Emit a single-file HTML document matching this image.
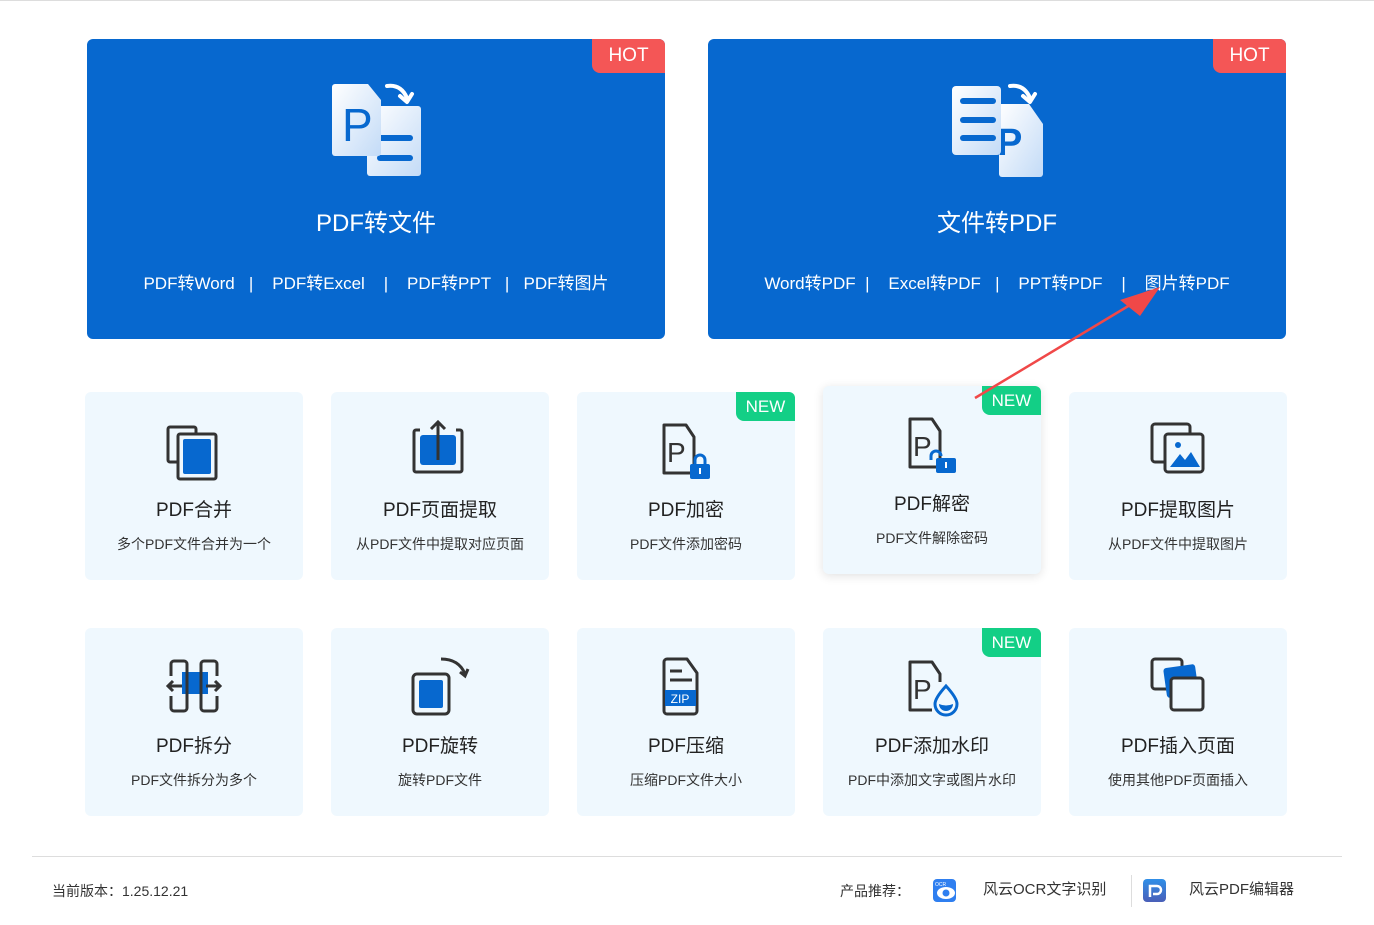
<!DOCTYPE html>
<html><head><meta charset="utf-8"><style>
*{margin:0;padding:0;box-sizing:border-box}
body{width:1374px;height:925px;background:#fff;position:relative;overflow:hidden;font-family:"Liberation Sans","Noto Sans CJK SC",sans-serif}
.big{position:absolute;top:39px;width:578px;height:300px;background:#0768cf;border-radius:6px;color:#fff;text-align:center}
.big .t{position:absolute;top:171px;left:0;right:0;font-size:24px;line-height:28px}
.big .l{position:absolute;top:235px;left:0;right:0;font-size:17px;line-height:20px;white-space:pre}
.hot{position:absolute;top:0;right:0;width:73px;height:34px;background:#f45656;border-radius:0 6px 0 8px;font-size:19px;line-height:34px;text-align:center;color:#fff}
.big svg{position:absolute;left:244px;top:44px}
.c{position:absolute;width:218px;height:188px;background:#eff8fe;border-radius:6px;text-align:center}
.c .t{position:absolute;top:108px;left:0;right:0;font-size:19px;line-height:22px;color:#222}
.c .s{position:absolute;top:144px;left:0;right:0;font-size:14px;line-height:16px;color:#333}
.c svg{position:absolute;left:79px;top:28px}
.new{position:absolute;top:0;right:0;width:59px;height:29px;background:#13cf86;border-radius:0 6px 0 8px;color:#fff;font-size:17px;line-height:29px;text-align:center}
.r1{top:392px}.r2{top:628px}
.ft{position:absolute;font-size:14px;line-height:18px;color:#333}
</style></head><body>
<div style="position:absolute;left:0;top:0;width:1374px;height:1px;background:#ddd"></div>

<svg width="0" height="0" style="position:absolute"><defs><linearGradient id="g" x1="0" y1="0" x2="1" y2="1"><stop offset="0" stop-color="#fff"/><stop offset="1" stop-color="#c3dbf7"/></linearGradient></defs></svg>

<div class="big" style="left:87px">
<div class="hot">HOT</div>
<svg width="92" height="95" viewBox="0 0 92 95">
<path d="M36 26 a3 3 0 0 1 3 -3 h48 a3 3 0 0 1 3 3 v64 a3 3 0 0 1 -3 3 h-48 a3 3 0 0 1 -3 -3z" fill="url(#g)"/>
<rect x="46" y="52" width="36" height="6" rx="3" fill="#0768cf"/><rect x="46" y="72" width="36" height="6" rx="3" fill="#0768cf"/>
<path d="M4 1 h33 l13 16 v53 a3 3 0 0 1 -3 3 h-43 a3 3 0 0 1 -3 -3 v-66 a3 3 0 0 1 3 -3z" fill="url(#g)"/>
<text x="11" y="58" font-size="46" fill="#0768cf" font-family="Liberation Sans">P</text>
<path d="M56 3 q14 -2 20 12" stroke="#fff" stroke-width="4" fill="none" stroke-linecap="round"/><path d="M69 13 l7 6 l5 -8" stroke="#fff" stroke-width="4" fill="none" stroke-linecap="round" stroke-linejoin="round"/>
</svg>
<div class="t">PDF转文件</div>
<div class="l">PDF转Word   |    PDF转Excel    |    PDF转PPT   |   PDF转图片</div>
</div>

<div class="big" style="left:708px">
<div class="hot">HOT</div>
<svg width="92" height="95" viewBox="0 0 92 95">
<path d="M47 21 h30 l14 20 v50 a3 3 0 0 1 -3 3 h-38 a3 3 0 0 1 -3 -3z" fill="url(#g)"/>
<text x="45" y="72" font-size="38" fill="#0768cf" font-family="Liberation Sans" font-weight="bold">P</text>
<path d="M58 3 q14 -2 20 12" stroke="#fff" stroke-width="4" fill="none" stroke-linecap="round"/><path d="M71 13 l7 6 l5 -8" stroke="#fff" stroke-width="4" fill="none" stroke-linecap="round" stroke-linejoin="round"/>
<rect x="0" y="3" width="49" height="69" rx="4" fill="url(#g)"/>
<rect x="8" y="15" width="36" height="6" rx="3" fill="#0768cf"/><rect x="8" y="34" width="36" height="6" rx="3" fill="#0768cf"/><rect x="8" y="52" width="36" height="6" rx="3" fill="#0768cf"/>
</svg>
<div class="t">文件转PDF</div>
<div class="l">Word转PDF  |    Excel转PDF   |    PPT转PDF    |    图片转PDF</div>
</div>

<!-- row1 -->
<div class="c r1" style="left:85px"><svg width="60" height="62" viewBox="0 0 60 62" fill="none" stroke="#333" stroke-width="3"><rect x="4" y="7" width="28" height="35" rx="2"/><rect x="14" y="14" width="38" height="45" rx="2" fill="#eff8fe"/><rect x="19" y="19" width="28" height="35" rx="2" fill="#0768cf" stroke="none"/></svg>
<div class="t">PDF合并</div><div class="s">多个PDF文件合并为一个</div></div>

<div class="c r1" style="left:331px"><svg width="60" height="62" viewBox="0 0 60 62" fill="none" stroke="#333" stroke-width="3"><path d="M10 10 h-4 a2 2 0 0 0 -2 2 v38 a2 2 0 0 0 2 2 h44 a2 2 0 0 0 2 -2 v-38 a2 2 0 0 0 -2 -2 h-4"/><rect x="10" y="15" width="36" height="30" rx="3" fill="#0768cf" stroke="none"/><path d="M28 40 v-38 M21 9 l7 -7 l7 7"/></svg>
<div class="t">PDF页面提取</div><div class="s">从PDF文件中提取对应页面</div></div>

<div class="c r1" style="left:577px"><div class="new">NEW</div><svg width="60" height="62" viewBox="0 0 60 62" fill="none" stroke="#333" stroke-width="3"><path d="M8 5 h22 l8 12 v36 h-30 z" stroke-linejoin="round"/><text x="11" y="42" font-size="28" fill="#333" stroke="none" font-family="Liberation Sans">P</text><path d="M39 44 v-4 a5 5 0 0 1 10 0 v4" stroke="#0768cf" stroke-width="3"/><rect x="34" y="44" width="20" height="15" rx="2" fill="#0768cf" stroke="none"/><rect x="43" y="48" width="2" height="6" fill="#fff" stroke="none"/></svg>
<div class="t">PDF加密</div><div class="s">PDF文件添加密码</div></div>

<div class="c" style="left:823px;top:386px;box-shadow:0 2px 10px rgba(0,0,0,.12)"><div class="new">NEW</div><svg width="60" height="62" viewBox="0 0 60 62" fill="none" stroke="#333" stroke-width="3"><path d="M8 5 h22 l8 12 v36 h-30 z" stroke-linejoin="round"/><text x="11" y="42" font-size="28" fill="#333" stroke="none" font-family="Liberation Sans">P</text><path d="M29 46 v-4 a5 5 0 0 1 10 0" stroke="#0768cf" stroke-width="3"/><rect x="34" y="44" width="20" height="15" rx="2" fill="#0768cf" stroke="none"/><rect x="43" y="48" width="2" height="6" fill="#fff" stroke="none"/></svg>
<div class="t">PDF解密</div><div class="s">PDF文件解除密码</div></div>

<div class="c r1" style="left:1069px"><svg width="60" height="62" viewBox="0 0 60 62" fill="none" stroke="#333" stroke-width="3"><rect x="4" y="4" width="38" height="38" rx="3"/><rect x="17" y="14" width="38" height="38" rx="3" fill="#eff8fe"/><circle cx="30" cy="25" r="3" fill="#0768cf" stroke="none"/><path d="M22 47 l10 -13 l5 6 l6 -8 l9 15 z" fill="#0768cf" stroke="none"/></svg>
<div class="t">PDF提取图片</div><div class="s">从PDF文件中提取图片</div></div>

<!-- row2 -->
<div class="c r2" style="left:85px"><svg width="60" height="62" viewBox="0 0 60 62" fill="none" stroke="#333" stroke-width="3"><rect x="18" y="16" width="26" height="22" fill="#0768cf" stroke="none"/><path d="M7 20 v-12 a3 3 0 0 1 3 -3 h10 a3 3 0 0 1 3 3 v44 a3 3 0 0 1 -3 3 h-10 a3 3 0 0 1 -3 -3 v-12"/><path d="M53 20 v-12 a3 3 0 0 0 -3 -3 h-10 a3 3 0 0 0 -3 3 v44 a3 3 0 0 0 3 3 h10 a3 3 0 0 0 3 -3 v-12"/><path d="M4 30 h14 M9 25 l-5 5 l5 5 M42 30 h14 M51 25 l5 5 l-5 5"/></svg>
<div class="t">PDF拆分</div><div class="s">PDF文件拆分为多个</div></div>

<div class="c r2" style="left:331px"><svg width="60" height="62" viewBox="0 0 60 62" fill="none" stroke="#333" stroke-width="3"><rect x="3" y="18" width="36" height="40" rx="4"/><rect x="9" y="24" width="24" height="28" rx="2" fill="#0768cf" stroke="none"/><path d="M31 3 q18 0 24 15 M50 16 l5 4 l3 -7"/></svg>
<div class="t">PDF旋转</div><div class="s">旋转PDF文件</div></div>

<div class="c r2" style="left:577px"><svg width="60" height="62" viewBox="0 0 60 62" fill="none" stroke="#333" stroke-width="3"><path d="M11 3 h20 l10 14 v38 a3 3 0 0 1 -3 3 h-27 a3 3 0 0 1 -3 -3 v-49 a3 3 0 0 1 3 -3z" stroke-linejoin="round"/><path d="M14 15 h12 M14 24 h22"/><rect x="9" y="34" width="31" height="16" fill="#0768cf" stroke="none"/><text x="24" y="47" font-size="12" fill="#fff" stroke="none" text-anchor="middle" font-family="Liberation Sans">ZIP</text></svg>
<div class="t">PDF压缩</div><div class="s">压缩PDF文件大小</div></div>

<div class="c r2" style="left:823px"><div class="new">NEW</div><svg width="60" height="62" viewBox="0 0 60 62" fill="none" stroke="#333" stroke-width="3"><path d="M30 54 h-22 v-48 h22 l8 12 v8" stroke-linejoin="round"/><text x="11" y="43" font-size="28" fill="#333" stroke="none" font-family="Liberation Sans">P</text><path d="M44 30 q-11 12 -11 18 a11 11 0 0 0 22 0 q0 -6 -11 -18z" stroke="#0768cf" fill="#eff8fe"/><path d="M37 48 q7 3 14 0 a7 7 0 0 1 -14 0z" fill="#0768cf" stroke="none"/></svg>
<div class="t">PDF添加水印</div><div class="s">PDF中添加文字或图片水印</div></div>

<div class="c r2" style="left:1069px"><svg width="60" height="62" viewBox="0 0 60 62" fill="none" stroke="#333" stroke-width="3"><rect x="4" y="3" width="30" height="30" rx="3"/><rect x="17" y="10" width="32" height="30" rx="3" fill="#0768cf" stroke="none" transform="rotate(-8 33 25)"/><rect x="23" y="22" width="32" height="32" rx="3" fill="#eff8fe"/></svg>
<div class="t">PDF插入页面</div><div class="s">使用其他PDF页面插入</div></div>

<!-- arrow -->
<svg style="position:absolute;left:0;top:0" width="1374" height="925"><line x1="975" y1="398" x2="1135" y2="302" stroke="#f04848" stroke-width="2.5"/><polygon points="1160,287 1120,300 1140,316" fill="#f04848"/></svg>

<div style="position:absolute;left:32px;top:856px;width:1310px;height:1px;background:#ddd"></div>
<div class="ft" style="left:52px;top:882px">当前版本：1.25.12.21</div>
<div class="ft" style="left:840px;top:882px">产品推荐：</div>
<div style="position:absolute;left:933px;top:879px;width:23px;height:23px;border-radius:4px;background:#2f7ff0"><svg width="23" height="23"><text x="2" y="7" font-size="5" fill="#fff" font-family="Liberation Sans">OCR</text><ellipse cx="13" cy="14" rx="9" ry="6" fill="#fff"/><circle cx="13" cy="14" r="3.5" fill="#2f7ff0"/></svg></div>
<div class="ft" style="left:983px;top:881px;font-size:15px">风云OCR文字识别</div>
<div style="position:absolute;left:1131px;top:875px;width:1px;height:32px;background:#ddd"></div>
<div style="position:absolute;left:1143px;top:879px;width:23px;height:23px;border-radius:4px;background:linear-gradient(#2f8fe8,#4a5fb8)"><svg width="23" height="23"><path d="M7 18 v-11 h7 a4 4 0 0 1 0 8 h-4" stroke="#fff" stroke-width="2.5" fill="none"/></svg></div>
<div class="ft" style="left:1189px;top:881px;font-size:15px">风云PDF编辑器</div>
</body></html>
